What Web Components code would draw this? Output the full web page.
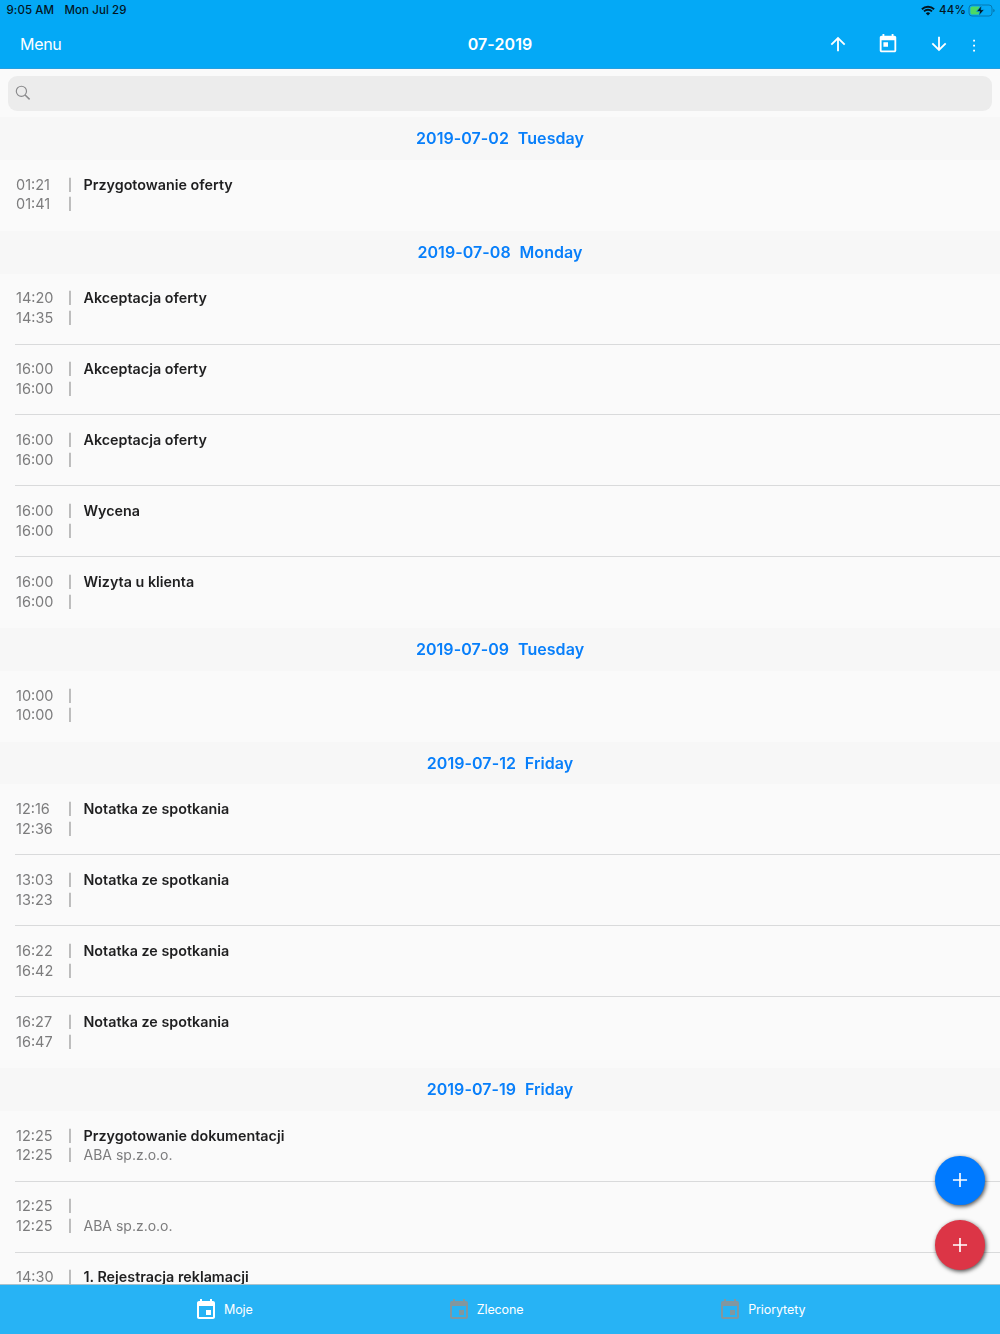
<!DOCTYPE html>
<html lang="pl">
<head>
<meta charset="utf-8">
<title>07-2019</title>
<style>
html, body{
    margin: 0;
    height: 100%;
}
body{
    font-family: Inter, "Liberation Sans", sans-serif;
    overflow: hidden;
}
</style>
</head>
<body>
<agenda-app></agenda-app>
<script>
const ICONS = {
    up: "M4 12l1.41 1.41L11 7.83V20h2V7.83l5.58 5.59L20 12l-8-8-8 8z",
    down: "M20 12l-1.41-1.41L13 16.17V4h-2v12.17l-5.58-5.59L4 12l8 8 8-8z",
    today: "M19 3h-1V1h-2v2H8V1H6v2H5c-1.11 0-1.99.9-1.99 2L3 19c0 1.1.89 2 2 2h14c1.1 0 2-.9 2-2V5c0-1.1-.9-2-2-2zm0 16H5V8h14v11zM7 10h5v5H7z",
    event: "M17 12h-5v5h5v-5zM16 1v2H8V1H6v2H5c-1.11 0-1.99.9-1.99 2L3 19c0 1.1.89 2 2 2h14c1.1 0 2-.9 2-2V5c0-1.1-.9-2-2-2h-1V1h-2zm3 18H5V8h14v11z",
    add: "M19.7 12.9h-6.8v6.8h-1.8v-6.8H4.3v-1.8h6.8V4.3h1.8v6.8h6.8z",
    more: "M10.7 2.5h2.8v2.8h-2.8zM10.7 10h2.8v2.8h-2.8zM10.7 17.5h2.8v2.8h-2.8z"
};

const DAYS = [
    { date: "2019-07-02", day: "Tuesday", events: [["01:21", "01:41", "Przygotowanie oferty"]] },
    { date: "2019-07-08", day: "Monday", events: [
        ["14:20", "14:35", "Akceptacja oferty"],
        ["16:00", "16:00", "Akceptacja oferty"],
        ["16:00", "16:00", "Akceptacja oferty"],
        ["16:00", "16:00", "Wycena"],
        ["16:00", "16:00", "Wizyta u klienta"]
    ] },
    { date: "2019-07-09", day: "Tuesday", events: [["10:00", "10:00"]] },
    { date: "2019-07-12", day: "Friday", events: [
        ["12:16", "12:36", "Notatka ze spotkania"],
        ["13:03", "13:23", "Notatka ze spotkania"],
        ["16:22", "16:42", "Notatka ze spotkania"],
        ["16:27", "16:47", "Notatka ze spotkania"]
    ] },
    { date: "2019-07-19", day: "Friday", events: [
        ["12:25", "12:25", "Przygotowanie dokumentacji", "ABA sp.z.o.o."],
        ["12:25", "12:25", "", "ABA sp.z.o.o."],
        ["14:30", "", "1. Rejestracja reklamacji"]
    ] }
];

// small helper: every element gets an open root filled from its template
class BaseElement extends HTMLElement{
    constructor(){
        super();
        const template = document.createElement("template");
        template.innerHTML = this.constructor.html;
        this.attachShadow({mode:"open"});
        this.shadowRoot.appendChild(template.content.cloneNode(true));
    }
}

class AppIcon extends BaseElement{
    static html = `
<style>
:host{ display: block; flex: none; width: 22px; height: 22px; }
svg{ display: block; width: 100%; height: 100%; fill: currentColor; }
</style>
<svg viewBox="0 0 24 24"><path/></svg>`;
    connectedCallback(){
        this.shadowRoot.querySelector("path").setAttribute("d", ICONS[this.getAttribute("name")]);
    }
}

class StatusBar extends BaseElement{
    static html = `
<style>
:host{
    display: flex;
    align-items: center;
    height: 20px;
    padding: 0 5px 0 6.5px;
    box-sizing: border-box;
    font-size: 11.5px;
    font-weight: 500;
    line-height: 20px;
    color: #03151f;
}
.time{ width: 58px; letter-spacing: .1px; }
.date{ flex: 1; letter-spacing: .08px; }
.wifi{ width: 14px; height: 11px; margin-right: 4.5px; }
.battery{ width: 27px; height: 13px; margin-left: 2px; }
.level{ letter-spacing: .15px; }
</style>
<span class="time">9:05 AM</span>
<span class="date">Mon Jul 29</span>
<svg class="wifi" viewBox="0 0 14 11">
  <path d="M.9 4.2a8.8 8.8 0 0 1 12.2 0M3 6.4a5.8 5.8 0 0 1 8 0" fill="none" stroke="#03151f" stroke-width="1.9"/>
  <path d="M4.8 8.2a3.2 3.2 0 0 1 4.4 0L7 10.5z" fill="#03151f"/>
</svg>
<span class="level">44%</span>
<svg class="battery" viewBox="0 0 27 13">
  <rect x="1" y="1" width="23" height="11" rx="3" fill="none" stroke="#0478b0"/>
  <path d="M25.2 4.7q1.5.4 1.5 1.8t-1.5 1.8z" fill="#0478b0"/>
  <path d="M4 2.4h7.5v8.2H4A1.6 1.6 0 0 1 2.4 9V4A1.6 1.6 0 0 1 4 2.4z" fill="#4cd964"/>
  <path d="M13.6 1.4L8.5 7.4h3.2L10.8 11.8 16.3 5.7H13z" fill="#03151f" stroke="#04a9f6" stroke-width=".7"/>
</svg>`;
}

class AppToolbar extends BaseElement{
    static html = `
<style>
:host{
    display: grid;
    grid-template-columns: 1fr auto 1fr;
    align-items: center;
    height: 49px;
    padding: 0 15px 0 20px;
    box-sizing: border-box;
    border-bottom: 1px solid #259fe0;
    color: #fff;
    font-size: 16px;
    line-height: 20px;
}
.left{ letter-spacing: -.3px; }
.title{ font-weight: 600; letter-spacing: .1px; margin-left: -5px; }
.actions{
    display: flex;
    justify-content: flex-end;
    align-items: center;
}
.actions app-icon{ margin-right: 28.7px; }
.actions app-icon:nth-child(3){ margin-right: 16px; }
.actions app-icon:last-child{ width: 16px; height: 16px; margin: 3px 3px 0 0; }
</style>
<span class="left"><slot name="left"></slot></span>
<span class="title"><slot></slot></span>
<div class="actions">
  <app-icon name="up"></app-icon>
  <app-icon name="today"></app-icon>
  <app-icon name="down"></app-icon>
  <app-icon name="more"></app-icon>
</div>`;
}

class SearchBox extends BaseElement{
    static html = `
<style>
:host{ display: block; padding: 6.5px 8px 6.7px; }
div{
    display: flex;
    align-items: center;
    height: 35px;
    padding-left: 7px;
    border-radius: 9px;
    background: #ececec;
}
svg{ width: 16px; height: 16px; margin-top: -.5px; }
</style>
<div>
  <svg viewBox="0 0 16 16" fill="none" stroke="#8a8a8c" stroke-width="1.15">
    <circle cx="6.4" cy="6.3" r="5.1"/><path d="M10.1 10l4.5 4.4" stroke-width="1.5"/>
  </svg>
</div>`;
}

class DayHeading extends BaseElement{
    static html = `
<style>
:host{
    display: flex;
    justify-content: center;
    gap: 8.8px;
    height: 42.9px;
    line-height: 43px;
    background: #f7f7f7;
    color: #087ffa;
    font-size: 16px;
    font-weight: 600;
    letter-spacing: .06px;
}
</style>
<slot name="date"></slot><slot></slot>`;
}

class EventRow extends BaseElement{
    static html = `
<style>
:host{
    display: block;
    height: 70.85px;
    padding-left: 15px;
    box-sizing: border-box;
}
.body{
    display: grid;
    grid-template-columns: 52px 15.5px 1fr;
    grid-template-rows: 19.7px 19.7px;
    height: 71px;
    padding: 14.85px 0 0 1px;
    box-sizing: border-box;
    border-bottom: 1px solid #d9dadb;
    line-height: 20px;
    font-size: 14.5px;
    color: #7c7c7d;
}
:host([last]) .body{ border-bottom-color: transparent; }
.bar{ font-size: 12px; }
.title{ color: #1f1f20; font-weight: 600; font-size: 14.3px; letter-spacing: .01px; }
.note{ font-size: 14px; }
</style>
<div class="body">
  <slot name="start"></slot><span class="bar">|</span><span class="title"><slot></slot></span>
  <slot name="end"></slot><span class="bar end">|</span><span class="note"><slot name="note"></slot></span>
</div>`;
    connectedCallback(){
        if(this.hasAttribute("open-end")) this.shadowRoot.querySelector(".end").remove();
    }
}

class FabButton extends BaseElement{
    static html = `
<style>
:host{
    display: grid;
    place-items: center;
    width: 49.5px;
    height: 49.5px;
    border-radius: 50%;
    background: var(--fab-color);
    box-shadow: 1px 1.5px 4px rgba(0,0,0,.7);
    color: #fff;
}
</style>
<app-icon name="add"></app-icon>`;
}

class TabItem extends BaseElement{
    static html = `
<style>
:host{
    display: flex;
    align-items: center;
    gap: 6px;
    color: #fff;
    font-size: 12.5px;
    line-height: 20px;
    letter-spacing: -.1px;
}
app-icon{ width: 24px; height: 24px; color: #82979f; }
:host([active]) app-icon{ color: #fff; }
</style>
<app-icon name="event"></app-icon><span><slot></slot></span>`;
}

class AgendaApp extends BaseElement{
    static html = `
<style>
:host{
    display: flex;
    flex-direction: column;
    position: relative;
    height: 100%;
    background: #fafafa;
}
header{ flex: none; background: #04a9f6; }
search-box{ flex: none; }
main{ flex: 1; min-height: 0; overflow: hidden; will-change: transform; }
nav{
    flex: none;
    display: grid;
    grid-template-columns: 252.7px 271.5px 1fr;
    height: 50px;
    padding: 0 0 0 194px;
    box-sizing: border-box;
    border-top: 1px solid #a9c1cc;
    background: #27b3f5;
}
.fabs{
    position: absolute;
    right: 15.3px;
    bottom: 64.5px;
    display: flex;
    flex-direction: column;
    gap: 14.8px;
}
</style>
<header>
  <status-bar></status-bar>
  <app-toolbar><span slot="left">Menu</span>07-2019</app-toolbar>
</header>
<search-box></search-box>
<main></main>
<nav>
  <tab-item active>Moje</tab-item>
  <tab-item>Zlecone</tab-item>
  <tab-item>Priorytety</tab-item>
</nav>
<div class="fabs">
  <fab-button style="--fab-color: #007aff"></fab-button>
  <fab-button style="--fab-color: #dc3546"></fab-button>
</div>`;

    connectedCallback(){
        this.render();
    }

    render(){
        let html = "";
        for(const {date, day, events} of DAYS){
            html += `<day-heading><span slot="date">${date}</span><span>${day}</span></day-heading>`;
            events.forEach(([start, end, title = "", note = ""], i) => {
                const last = i == events.length - 1 ? "last" : "";
                const open = end ? "" : "open-end";
                html += `<event-row ${last} ${open}><span slot="start">${start}</span><span slot="end">${end}</span>${title}<span slot="note">${note}</span></event-row>`;
            });
        }
        this.shadowRoot.querySelector("main").innerHTML = html;
    }
}

customElements.define("app-icon", AppIcon);
customElements.define("status-bar", StatusBar);
customElements.define("app-toolbar", AppToolbar);
customElements.define("search-box", SearchBox);
customElements.define("day-heading", DayHeading);
customElements.define("event-row", EventRow);
customElements.define("fab-button", FabButton);
customElements.define("tab-item", TabItem);
customElements.define("agenda-app", AgendaApp);
</script>
</body>
</html>
